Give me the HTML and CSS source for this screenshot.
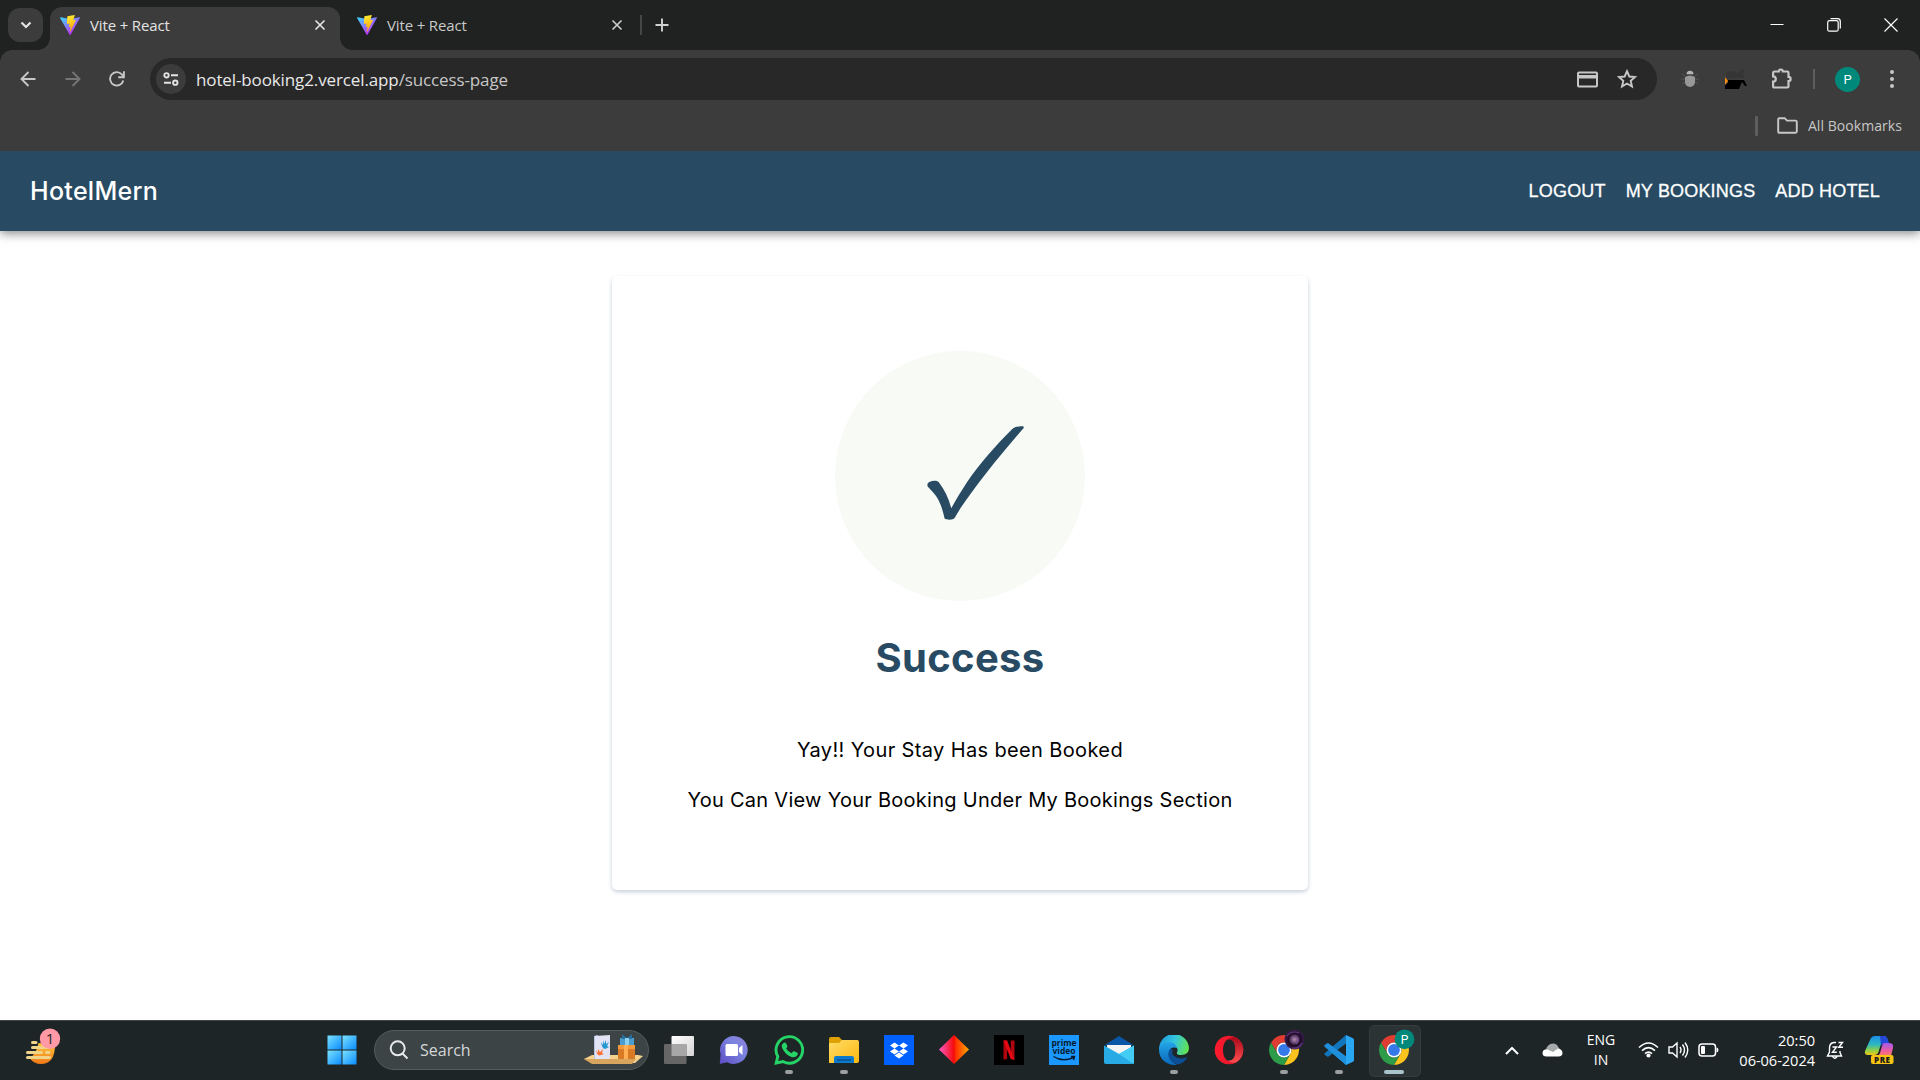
FILE: index.html
```html
<!DOCTYPE html>
<html lang="en">
<head>
<meta charset="utf-8">
<title>Vite + React</title>
<link rel="stylesheet" href="styles.css">
</head>
<body>
<svg class="defs" width="0" height="0" aria-hidden="true">
  <defs>
    <linearGradient id="v1" x1="0" y1=".1" x2=".6" y2=".9"><stop offset="0" stop-color="#41d1ff"/><stop offset="1" stop-color="#bd34fe"/></linearGradient>
    <linearGradient id="v2" x1=".4" y1="0" x2=".6" y2="1"><stop offset="0" stop-color="#ffea33"/><stop offset="1" stop-color="#ffa000"/></linearGradient>
    <linearGradient id="win" x1="0" y1="0" x2="1" y2="1"><stop offset="0" stop-color="#7ae2ff"/><stop offset="1" stop-color="#0a8bff"/></linearGradient>
    <linearGradient id="chat" x1="1" y1="0" x2="0" y2="1"><stop offset="0" stop-color="#8f80dd"/><stop offset=".4" stop-color="#7b83df"/><stop offset="1" stop-color="#5b4bc4"/></linearGradient>
    <linearGradient id="fold" x1="0" y1="0" x2="1" y2="1"><stop offset="0" stop-color="#ffdc68"/><stop offset="1" stop-color="#fbb80f"/></linearGradient>
    <linearGradient id="dia"><stop offset="0" stop-color="#ff5bc8"/><stop offset=".5" stop-color="#f50a0a"/><stop offset=".56" stop-color="#ff3000"/><stop offset="1" stop-color="#ffa800"/></linearGradient>
    <linearGradient id="edge1" x1="0" y1=".3" x2="1" y2=".5"><stop offset="0" stop-color="#1f9be0"/><stop offset=".5" stop-color="#33c6dd"/><stop offset="1" stop-color="#62e252"/></linearGradient>
    <linearGradient id="edge2" x1="0" y1="0" x2="0" y2="1"><stop offset="0" stop-color="#24a5e8"/><stop offset="1" stop-color="#0967ba"/></linearGradient>
    <linearGradient id="opera"><stop offset="0" stop-color="#ff1b2d"/><stop offset="1" stop-color="#d8142a"/></linearGradient>
    <linearGradient id="opera2" x1="0" y1="0" x2="0" y2="1"><stop offset="0" stop-color="#a8081a"/><stop offset="1" stop-color="#ff5050"/></linearGradient>
    <linearGradient id="view" x1="0" y1="0" x2="1" y2="1"><stop offset="0" stop-color="#fff"/><stop offset="1" stop-color="#d4d4d4"/></linearGradient>
    <linearGradient id="cop1" x1="0" y1="0" x2="0" y2="1"><stop offset="0" stop-color="#1c8ee8"/><stop offset=".45" stop-color="#2eb8c0"/><stop offset=".75" stop-color="#8ccf48"/><stop offset="1" stop-color="#f0c818"/></linearGradient>
    <linearGradient id="cop2" x1="0" y1="0" x2="0" y2="1"><stop offset="0" stop-color="#a15cf0"/><stop offset=".6" stop-color="#ee5c9c"/><stop offset="1" stop-color="#ff8060"/></linearGradient>
    <linearGradient id="wthr" x1="0" y1="0" x2="0" y2="1"><stop offset="0" stop-color="#ffc83c"/><stop offset="1" stop-color="#f07818"/></linearGradient>
    <radialGradient id="face"><stop offset="0" stop-color="#b68fae"/><stop offset=".35" stop-color="#6a4878"/><stop offset=".6" stop-color="#1d0a24"/><stop offset="1" stop-color="#3a2050"/></radialGradient>
    <symbol id="vite" viewBox="0 0 256 257">
      <path fill="url(#v1)" d="M255.153 37.938L134.897 252.976c-2.483 4.44-8.862 4.466-11.382.048L.875 37.958c-2.746-4.814 1.371-10.646 6.827-9.67l120.385 21.517a6.537 6.537 0 0 0 2.322-.004l117.867-21.483c5.438-.991 9.574 4.796 6.877 9.62Z"/>
      <path fill="url(#v2)" d="M185.432.063L96.44 17.501a3.268 3.268 0 0 0-2.634 3.014l-5.474 92.456a3.268 3.268 0 0 0 3.997 3.378l24.777-5.718c2.318-.535 4.413 1.507 3.936 3.838l-7.361 36.047c-.495 2.426 1.782 4.5 4.151 3.78l15.304-4.649c2.372-.72 4.652 1.36 4.15 3.788l-11.698 56.621c-.732 3.542 3.979 5.473 5.943 2.437l1.313-2.028l72.516-144.72c1.215-2.423-.88-5.186-3.54-4.672l-25.505 4.922c-2.396.462-4.435-1.77-3.759-4.114l16.646-57.705c.677-2.35-1.37-4.583-3.769-4.113Z"/>
    </symbol>
    <symbol id="x" viewBox="0 0 12 12"><path d="M1.5 1.5l9 9M10.500 1.500l-9 9" stroke="currentColor" stroke-width="1.7" fill="none"/></symbol>
    <symbol id="chrome" viewBox="-15 -15 30 30">
      <path fill="#e03c31" d="M-12.99-7.5A15 15 0 0 1 12.99-7.5L0-7.5A7.5 7.5 0 0 0-6.5 3.75Z"/>
      <path fill="#fcc31e" transform="rotate(120)" d="M-12.99-7.5A15 15 0 0 1 12.99-7.5L0-7.5A7.5 7.5 0 0 0-6.5 3.75Z"/>
      <path fill="#2d9c48" transform="rotate(240)" d="M-12.99-7.5A15 15 0 0 1 12.99-7.5L0-7.5A7.5 7.5 0 0 0-6.5 3.75Z"/>
      <circle r="7.5" fill="#fff"/><circle r="5.900" fill="#3478ea"/>
    </symbol>
  </defs>
</svg>

<div class="tabstrip">
  <div class="tab-search"><svg width="12" height="8" viewBox="0 0 12 8"><path d="M1.500 1.500L6 6l4.500-4.500" fill="none" stroke="#e3e3e3" stroke-width="2.200"/></svg></div>
  <div class="tab active"><svg class="fav"><use href="#vite"/></svg><span class="tab-title">Vite + React</span><svg class="tab-x"><use href="#x"/></svg></div>
  <div class="tab"><svg class="fav"><use href="#vite"/></svg><span class="tab-title">Vite + React</span><svg class="tab-x"><use href="#x"/></svg></div>
  <div class="tab-sep"></div>
  <svg class="tab-plus" width="14" height="14" viewBox="0 0 14 14"><path d="M7 .5v13M.5 7h13" stroke="#d0d0d0" stroke-width="1.900"/></svg>
  <div class="win-controls">
    <div class="win-btn"><svg width="14" height="14"><path d="M.5 6.500h13" stroke="#fff" stroke-width="1"/></svg></div>
    <div class="win-btn"><svg width="14" height="14" fill="none" stroke="#fff" stroke-width="1.200"><rect x=".7" y="2.700" width="10.500" height="10.500" rx="1.800"/><path d="M3.500.7h7a2.800 2.800 0 0 1 2.800 2.800v7"/></svg></div>
    <div class="win-btn"><svg width="14" height="14"><path d="M.5.5l13 13M13.500.5l-13 13" stroke="#fff" stroke-width="1.200"/></svg></div>
  </div>
</div>

<div class="chrome-bars">
  <div class="toolbar">
    <svg class="nav-icon" viewBox="0 0 16 16"><path d="M15.500 8H1.500M8.500 1L1.500 8l7 7"/></svg>
    <svg class="nav-icon off" viewBox="0 0 16 16"><path d="M.5 8h14M7.500 1l7 7-7 7"/></svg>
    <svg class="nav-icon" viewBox="0 0 16 16"><path d="M14.300 9.500A6.700 6.700 0 1 1 12.800 3.300L14.800 5.500M14.900.3v5.900H9.200"/></svg>
    <div class="url-field">
      <div class="site-info"><svg width="16" height="14" fill="none" stroke="#e3e3e3" stroke-width="1.900"><circle cx="3.500" cy="3.300" r="2.200"/><path d="M8 3.300h7M1 10.700h7"/><circle cx="12.300" cy="10.700" r="2.200"/></svg></div>
      <div class="url"><b>hotel-booking2.vercel.app</b>/success-page</div>
      <svg class="pay" width="21" height="17" viewBox="0 0 21 17"><path fill="#c7c7c7" fill-rule="evenodd" d="M2 .5h17a2 2 0 0 1 2 2v12a2 2 0 0 1-2 2H2a2 2 0 0 1-2-2v-12a2 2 0 0 1 2-2zM2 2.500v1.400h17V2.500zM2 7.600v6.900h17V7.600z"/></svg>
      <svg width="20" height="20" viewBox="0 0 20 20"><path d="M10 2.200l2.300 5.300 5.700.5-4.300 3.800 1.300 5.700-5-3-5 3 1.300-5.700L2 8l5.700-.5z" fill="none" stroke="#c7c7c7" stroke-width="1.900"/></svg>
    </div>
    <svg class="ext-bug" width="18" height="18" viewBox="0 0 18 18"><path d="M1 4l3 2M0 9h4M1 14l3-2M17 4l-3 2M18 9h-4M17 14l-3-2" stroke="#555" fill="none"/><path d="M5.500 4.200a3.500 3.500 0 0 1 7 0z" fill="#b5b5b5"/><path d="M4 7q5-3 10 0v5a5 5 0 0 1-10 0z" fill="#989898"/></svg>
    <svg class="ext-cat" width="22" height="22" viewBox="0 0 22 22"><path d="M1 5q5-4 10 0 4 0 5-3l4-1-2 5 2 4H1z" fill="#353535"/><path d="M0 9l3 4-3 4z" fill="#f58a0c"/><path d="M3 12h16l3 6h-2l-3-4-3 7H0v-4l3-2z" fill="#000"/></svg>
    <svg class="puzzle" width="22" height="22" viewBox="0 0 22 22"><path d="M3.500 3.500h4.300a2 2 0 0 1 4 0h4.500q1.200 0 1.200 1.200v4.200a2.100 2.100 0 0 1 0 4.200v5.200q0 1.200-1.200 1.200H3.300q-1.200 0-1.200-1.200v-4.600a2.700 2.700 0 0 0 0-5.400V4.700q0-1.200 1.400-1.200z" fill="none" stroke="#c7c7c7" stroke-width="2.200"/></svg>
    <div class="bar-sep"></div>
    <div class="avatar">P</div>
    <svg class="dots" width="4" height="18" fill="#c7c7c7"><circle cx="2" cy="2" r="2"/><circle cx="2" cy="9" r="2"/><circle cx="2" cy="16" r="2"/></svg>
  </div>
  <div class="bookmarks">
    <div class="bm-sep"></div>
    <svg width="21" height="17" viewBox="0 0 21 17"><path d="M2.200 1.200h5.500l2.300 2.400h8.600q1.200 0 1.200 1.200v9.800q0 1.200-1.200 1.200H2.400q-1.200 0-1.200-1.200V2.400q0-1.200 1-1.200z" fill="none" stroke="#c7c7c7" stroke-width="1.900"/></svg>
    <span>All Bookmarks</span>
  </div>
</div>

<header class="site-header">
  <div class="brand">HotelMern</div>
  <nav class="site-nav"><a>LOGOUT</a><a>MY BOOKINGS</a><a>ADD HOTEL</a></nav>
</header>

<main class="page">
  <section class="card">
    <div class="badge"><svg width="250" height="250" viewBox="835 351 250 250"><path fill="#284b63" d="M927.800 486.700C927 484.500 927.300 483.300 929 482.200C931.500 481 934 480.600 936.700 481C937.600 481.200 938.200 481.500 938.800 482.300C944.500 489.500 948.500 498 951.300 508.300C956 499.500 961.500 490.500 967.300 481.700C974 472 981 463 988 455C996 445.500 1004 437 1012.300 428.900C1015.500 426.700 1018.500 426.300 1022.900 426.300C1024 426.600 1024.100 427.300 1023.500 428.300C1018 434.500 1012.500 441 1006.400 448.300C998.500 457.500 991 467 983.400 476.700C975 487.500 967.500 498 960.400 508.300L954.600 518C953.600 519.300 952 519.600 949.400 519.700C947 519.700 945.600 519.500 944.600 518.600C943.600 514 942.400 509.500 940.700 505C938.900 500.500 936.700 496.500 933.800 493.300C932 491 930 488.700 927.800 486.700Z"/></svg></div>
    <h1>Success</h1>
    <p class="booked">Yay!! Your Stay Has been Booked</p>
    <p class="hint">You Can View Your Booking Under My Bookings Section</p>
  </section>
</main>

<footer class="taskbar">
  <div class="weather"><svg width="50" height="50" viewBox="0 0 50 50"><path d="M31 20Q31 39 17 39 10 39 5.500 33q7-4 9-15z" fill="url(#wthr)"/><path d="M8.500 17.500h3.500M8.500 22.500h15M3.500 27.500h14M22.500 27.500h2.500M3.500 32.500h22" stroke="#f0d489" stroke-width="3" stroke-linecap="round"/><circle cx="26" cy="13.700" r="10.200" fill="#ff99a6"/><text x="26" y="19.200" text-anchor="middle" class="count">1</text></svg></div>
  <div class="app"><svg width="30" height="30"><g fill="url(#win)"><rect x=".5" y=".5" width="14" height="14"/><rect x="15.500" y=".5" width="14" height="14"/><rect x=".5" y="15.500" width="14" height="14"/><rect x="15.500" y="15.500" width="14" height="14"/></g></svg></div>
  <div class="search">
    <svg width="20" height="20" viewBox="0 0 20 20" fill="none" stroke="#e8eaea" stroke-width="2"><circle cx="8.700" cy="8.300" r="7"/><path d="M13.500 13.500l5 5"/></svg>
    <span>Search</span>
    <svg class="gifts" width="60" height="32" viewBox="0 0 60 32"><path d="M0 25l8-4h46l5 1-8 7H9z" fill="#f6d08d"/><path d="M0 25h52l-4 5H8z" fill="#d8a55e"/><path d="M10 2l4-1v24h-4z" fill="#b9c4e2"/><path d="M11 2l15-1v24H11z" fill="#e2e3f4"/><path d="M17 8l2 3 0-5 1 4 2-4v4l3-2-2 4 2 1-4 2q-3 0-4-7" fill="#2598cf"/><path d="M12 16l2 3v-4l2 3 3-3-1 4 2 1-3 1q-4 2-5-5" fill="#ff7134"/><path d="M36 4h14v8H36z" fill="#4a9dcc"/><path d="M38 0l5 4 5-4v5H38z" fill="#276e9c"/><path d="M41 4h4v8h-4z" fill="#8bd0ee"/><path d="M34 11h17v14H34z" fill="#d97b24"/><path d="M34 11h17v4H34z" fill="#f59a3c"/><path d="M40 11h4v14h-4z" fill="#ffb054"/></svg>
  </div>
  <div class="app"><svg width="30" height="30"><rect x="7.500" y="1" width="22.500" height="20" rx="1" fill="url(#view)"/><rect x="0" y="9" width="22.500" height="20" rx="1" fill="#666"/><path d="M7.500 9h15v12h-15z" fill="#a7a7a7"/></svg></div>
  <div class="app"><svg width="30" height="30"><path d="M15 1a14 14 0 1 1-7 26.300L.8 29l.8-10A14 14 0 0 1 15 1z" fill="url(#chat)"/><rect x="6.500" y="9" width="12.500" height="12" rx="1.500" fill="#fff"/><path d="M20 13l3.500-3v10L20 17z" fill="#fff"/></svg></div>
  <div class="app run"><svg width="30" height="30"><path d="M2.200 28l1.600-6.500A13.300 13.300 0 1 1 9 26.600z" fill="none" stroke="#25d366" stroke-width="2.900"/><path d="M9.500 8q1.500-1.300 2.600.3l1.200 2.800q.3 1-1.200 2.500 2 3.200 5.400 4.600l1.500-1.700q.6-.6 1.400-.2l3 1.500q.8.500.2 2-1 2.500-4 2.400-4.500-.4-8.200-4.300-4.500-5-3.500-7.800.5-1.300 1.600-2.100z" fill="#25d366"/></svg></div>
  <div class="app run"><svg width="30" height="30"><path d="M0 4q0-2 2-2h8l3 3h16v9H0z" fill="#e0a106"/><path d="M0 8h10l3-3h15q2 0 2 2v19q0 2-2 2H0z" fill="url(#fold)"/><path d="M5 28v-5q0-2 2-2h16q2 0 2 2v5z" fill="#0d79ca"/><path d="M8 25h14" stroke="#053f7a"/></svg></div>
  <div class="app"><svg width="30" height="30"><path d="M0 0h30v30H0z" fill="#0061ff"/><path fill="#fff" d="M10.500 7.500l4.500 3-4.500 3-4.500-3zM19.500 7.500l4.500 3-4.500 3-4.500-3zM10.500 13.500l4.500 3-4.500 3-4.500-3zM19.500 13.500l4.500 3-4.500 3-4.500-3zM15 17.400l4.500 3-4.500 3-4.500-3z"/></svg></div>
  <div class="app"><svg width="30" height="30"><path d="M15 0l15 14.500L15 29 0 14.500z" fill="url(#dia)"/></svg></div>
  <div class="app"><svg width="30" height="30"><path d="M0 0h30v30H0z"/><path d="M9.500 5.500h3.600V24l-3.600.7zM16.800 5.500h3.700v19.200l-3.700-.7z" fill="#b1060f"/><path d="M9.500 5.500h3.600l7.400 19.200-3.700-.7z" fill="#e50914"/></svg></div>
  <div class="app"><svg width="30" height="30"><path d="M0 0h30v30H0z" fill="#1a98ff"/><text x="15" y="10.500" text-anchor="middle" class="pv">prime</text><text x="15" y="19" text-anchor="middle" class="pv">video</text><path d="M4.500 21.500q9 6 20 1M22 21.500h3.500l-1 3.500" fill="none" stroke="#061b2e" stroke-width="1.500"/></svg></div>
  <div class="app"><svg width="30" height="30"><path d="M0 10.500L15 1l15 9.500z" fill="#0a56a6"/><path d="M3 10h24v10H3z" fill="#f4f4f4"/><path d="M0 10.500l15 8.500 15-8.500V27q0 2-2 2H2q-2 0-2-2z" fill="#35bbee"/><path d="M15 19l15 10H2q-2 0-2-2V10.500z" fill="#1690d8" opacity=".4"/><path d="M15 19l15-8.500V29z" fill="#43cdf5"/></svg></div>
  <div class="app run"><svg width="30" height="30"><path d="M0 15A15 15 0 0 1 30 13q0 7-8 7-5 0-4-3 2-3-2-6Q8 6 0 15z" fill="url(#edge1)"/><path d="M0 15Q3 7 11 7q6 1 7 6-7-2-8 5-1 8 8 11.700A15 15 0 0 1 0 15z" fill="url(#edge2)"/><path d="M11 14q-4 6 1 12 4 4 8 3.200 5-1.200 8-6.200.5-1.200-1-.5-7 2.500-12-1.500-3-3-1-6z" fill="#0d4f94"/></svg></div>
  <div class="app"><svg width="30" height="30"><path fill="url(#opera)" fill-rule="evenodd" d="M15 .7a14.300 14.300 0 1 0 .01 0zM15.500 4c3.800 0 6 5 6 11s-2.200 11-6 11-6.500-5-6.500-11 2.700-11 6.500-11z"/><path d="M14 4.500q5-4 9.500-1Q29.300 8 29.300 15T23.500 26.500q-4.500 3-9.500-1 7.500 1 7.500-10.500T14 4.500z" fill="url(#opera2)"/></svg></div>
  <div class="app run"><svg width="30" height="30" class="over"><use href="#chrome" width="30" height="30"/><circle cx="25.500" cy="4.500" r="10" fill="url(#face)"/><path d="M18 1q5-6 12-3M33 8q-3 6-10 5M28 2q3 4-1 7" stroke="#8a56b4" stroke-width="1.200" fill="none" opacity=".6"/></svg></div>
  <div class="app run"><svg width="30" height="30"><path d="M22 0l7 3.300q1 .5 1 1.700v20q0 1.200-1 1.700L22 30z" fill="#2aa7f2"/><path d="M22 30L.5 11.500Q0 10.500 1 10l2-1.500q.7-.5 1.500 0L22 21.500z" fill="#1b86d1"/><path d="M22 0L.5 18.500q-.5 1 .5 1.500l2 1.500q.7.5 1.500 0L22 8.500z" fill="#1276bd"/><path d="M.5 11.500Q0 10.500 1 10l2-1.500q.7-.5 1.500 0L22 21.500V30z" fill="#1f8fdb"/></svg></div>
  <div class="app run current"><svg width="30" height="30" class="over"><use href="#chrome" width="30" height="30"/><circle cx="25.500" cy="4.300" r="9.900" fill="#00897b"/><text x="25.500" y="8.600" text-anchor="middle" class="pbadge">P</text></svg></div>

  <div class="tray">
    <svg class="t-chev" width="14" height="9"><path d="M1 8l6-6 6 6" fill="none" stroke="#fff" stroke-width="2"/></svg>
    <svg class="t-cloud" width="21" height="14"><path d="M4 7Q5 1 11 .5q4 0 5.500 4L20 8 8 11z" fill="#a7aaab"/><path d="M4.500 13.500Q.5 13.500.5 10T5 6.300L11 9l5-3.400q4.500 1 4.500 4.500 0 3.400-4 3.400z" fill="#fff"/></svg>
    <div class="t-lang">ENG<br>IN</div>
    <svg class="t-wifi" width="21" height="16" viewBox="0 0 21 16" fill="none" stroke="#fff" stroke-width="1.600"><path d="M1 5.500q9.500-9 19 0M4 8.700q6.500-6 13 0M7 11.700q3.500-3.200 7 0"/><circle cx="10.500" cy="13.500" r="1.300" fill="#fff"/></svg>
    <svg class="t-sound" width="21" height="18" viewBox="0 0 21 18" fill="none" stroke="#fff" stroke-width="1.400"><path d="M1 6h3.500L9 2v14l-4.500-4H1zM12 6q2 3 0 6M14.500 3.500q4 5.500 0 11M17 1.500q5.500 7.500 0 15"/></svg>
    <svg class="t-batt" width="21" height="14" viewBox="0 0 21 14"><rect x="1" y="1" width="16.500" height="12" rx="3" fill="none" stroke="#fff" stroke-width="1.500"/><rect x="3" y="3" width="4" height="8" rx="1" fill="#fff"/><path d="M18.500 4.500q2 .3 2 2.500t-2 2.500z" fill="#fff"/></svg>
    <div class="t-clock">20:50<br>06-06-2024</div>
    <svg class="t-bell" width="18" height="19" viewBox="0 0 18 19" fill="none" stroke="#fff" stroke-width="1.400"><path d="M10 1.500H8Q3.500 2 3.500 7v4L1.500 15h14l-1.500-3.500V10M6.500 15.500q2.200 3.500 4.500 0M6.500 6h4l-4 5.200h4.300M12.500 1.500h4L12.800 6.300h4.200"/></svg>
    <svg class="t-copilot" width="32" height="30" viewBox="0 0 32 30"><path d="M6 5Q7.500 1 11 1h9q3 0 3.500 4l.5 3h-4q-3 0-4 4l-1.500 5q-1 3-4.500 3H4q-4 0-3-4z" fill="url(#cop1)"/><path d="M16 1h4q3 0 4 4l1 3h-4q-3 0-4 3z" fill="#2548d8"/><path d="M20 8h5q5 0 4 5l-2 8H12q3 0 4-3l2-7q.7-3 2-3z" fill="url(#cop2)"/><rect x="7" y="20" width="22.500" height="9" rx="2" fill="#f7c414"/><text x="18.300" y="27.700" text-anchor="middle" class="pre">PRE</text></svg>
  </div>
</footer>
</body>
</html>
```
FILE: styles.css
```css
* { box-sizing: border-box; }
body {
  margin: 0;
  width: 1920px;
  height: 1080px;
  overflow: hidden;
  display: flex;
  flex-direction: column;
  background: #fff;
  font-family: "Open Sans", "Noto Sans", sans-serif;
}
svg { display: block; flex: none; }
.defs { position: absolute; }

/* Browser tab strip */
.tabstrip {
  height: 50px;
  display: flex;
  align-items: center;
  padding-left: 8px;
  background: #1f2220;
  color: #e3e3e3;
}
.tab-search {
  width: 35px;
  height: 34px;
  margin-right: 7px;
  border-radius: 12px;
  background: #3c3c3c;
  display: flex;
  align-items: center;
  justify-content: center;
}
.tab {
  position: relative;
  width: 290px;
  height: 43px;
  margin: 7px 0 0 7px;
  padding: 0 14px 7px 10px;
  display: flex;
  align-items: center;
  color: #c9cac9;
}
.tab.active {
  margin-left: 0;
  border-radius: 12px 12px 0 0;
  background: #3c3c3c;
  color: #e3e3e3;
}
.tab.active::before,
.tab.active::after {
  content: "";
  position: absolute;
  bottom: 0;
  width: 12px;
  height: 12px;
}
.tab.active::before { left: -12px; background: radial-gradient(circle at 0 0, transparent 11.5px, #3c3c3c 12px); }
.tab.active::after { right: -12px; background: radial-gradient(circle at 100% 0, transparent 11.5px, #3c3c3c 12px); }
.fav { width: 20px; height: 20px; }
.tab-title { flex: 1; margin-left: 10px; font-size: 15px; letter-spacing: -0.15px; line-height: 20px; }
.tab-x { width: 12px; height: 12px; }
.tab-sep { width: 2px; height: 20px; margin-left: 3px; background: #454746; }
.tab-plus { margin-left: 13px; }
.win-controls { display: flex; margin-left: auto; padding-right: 1px; }
.win-btn { width: 57px; display: flex; justify-content: center; }

/* Toolbar and bookmarks bar */
.chrome-bars {
  height: 101px;
  background: radial-gradient(circle at 12px 12px, #3c3c3c 11.5px, #1f2220 12px) 0 0 / 12px 12px no-repeat,
    radial-gradient(circle at 0 12px, #3c3c3c 11.5px, #1f2220 12px) 100% 0 / 12px 12px no-repeat, #3c3c3c;
}
.toolbar { height: 58px; display: flex; align-items: center; padding-left: 20px; }
.nav-icon { width: 16px; height: 16px; margin-right: 28.5px; fill: none; stroke: #c7c7c7; stroke-width: 1.9; }
.nav-icon.off { stroke: #757575; }
.url-field {
  width: 1507px;
  height: 42px;
  margin-left: -3.5px;
  padding: 0 20px 0 6px;
  border-radius: 21px;
  background: #282828;
  display: flex;
  align-items: center;
}
.site-info {
  width: 30px;
  height: 30px;
  border-radius: 50%;
  background: #3c3c3c;
  display: flex;
  align-items: center;
  justify-content: center;
}
.url { flex: 1; margin-left: 10px; padding-top: 1px; font-size: 17px; letter-spacing: -0.12px; line-height: 24px; color: #c7c7c7; }
.url b { font-weight: 400; color: #e9e9e9; }
.pay { margin-right: 19px; }
.ext-bug { margin-left: 24px; }
.ext-cat { margin-left: 26px; }
.puzzle { margin-left: 23.5px; }
.bar-sep { width: 2px; height: 20px; margin-left: 20.500px; background: #5e5e5e; }
.avatar {
  width: 25px;
  height: 25px;
  margin-left: 20px;
  border-radius: 50%;
  background: #00897b;
  color: #fff;
  font: 13px/25px Roboto, sans-serif;
  text-align: center;
}
.dots { margin-left: 30px; }
.bookmarks {
  display: flex;
  align-items: center;
  justify-content: flex-end;
  height: 35px;
  padding-right: 18px;
  color: #c7c7c7;
  font-size: 14px;
}
.bookmarks span { margin-left: 10px; letter-spacing: 0.06px; }
.bm-sep { width: 3px; height: 20px; margin-right: 19px; border-radius: 1px; background: #5e5e5e; }

/* Site header */
.site-header {
  position: relative;
  height: 80px;
  padding: 0 40px 0 30px;
  display: flex;
  align-items: center;
  justify-content: space-between;
  background: #284b63;
  color: #fff;
  box-shadow: 0 2px 10px rgba(0, 0, 0, 0.5);
  clip-path: inset(0 0 -20px 0);
}
.brand { font: 500 25px/38px Inter, sans-serif; letter-spacing: 0.3px; }
.site-nav { display: flex; gap: 20px; font: 18px/24px "Liberation Sans", Arial, sans-serif; letter-spacing: 0.18px; -webkit-text-stroke: 0.3px #fff; }

/* Confirmation card */
.page { flex: 1; display: flex; justify-content: center; align-items: flex-start; padding-top: 45px; }
.card {
  width: 696px;
  padding: 75px 0;
  border-radius: 5px;
  background: #fff;
  box-shadow: 0 2px 4px #c8d0d8;
  display: flex;
  flex-direction: column;
  align-items: center;
  font-family: Inter, sans-serif;
}
.badge { width: 250px; height: 250px; border-radius: 50%; background: #f8faf5; }
.card h1 { margin: 27px 0 47px; font-size: 40px; line-height: 60px; font-weight: 700; letter-spacing: 0.3px; color: #284b63; }
.card p { margin: 0; font-size: 20px; line-height: 30px; color: #000; }
.card .booked { letter-spacing: 0.37px; margin-bottom: 20px; }
.card .hint { letter-spacing: 0.27px; }

/* Windows taskbar */
.taskbar {
  height: 60px;
  display: flex;
  align-items: center;
  background: #1d2526;
  box-shadow: inset 0 1px #3e4647;
  color: #fff;
}
.weather { width: 314.5px; padding-left: 24px; }
.count { font: 15px "Open Sans", sans-serif; fill: #1d2526; }
.search {
  width: 275px;
  height: 40px;
  margin: 0 2.5px 0 4.5px;
  padding: 0 4px 0 14px;
  border: 1px solid #555c5e;
  border-radius: 20px;
  background: #3c4446;
  display: flex;
  align-items: center;
  color: #d4d7d8;
  font-size: 16px;
}
.search span { flex: 1; margin-left: 11px; }
.app {
  position: relative;
  width: 55px;
  height: 60px;
  display: flex;
  align-items: center;
  justify-content: center;
}
.over { overflow: visible; }
.run::after {
  content: "";
  position: absolute;
  bottom: 6px;
  width: 8px;
  height: 4px;
  border-radius: 2px;
  background: #9b9fa0;
}
.current { z-index: 0; }
.current::before {
  content: "";
  position: absolute;
  z-index: -1;
  left: 2.5px;
  top: 5px;
  width: 50px;
  height: 50px;
  border: 1px solid #343c3d;
  border-radius: 5px;
  background: #2b3334;
}
.current::after { width: 20px; background: #a9c5cb; }
.pv { font: 700 8.5px "Open Sans", sans-serif; fill: #061b2e; }
.pbadge { font: 12px Roboto, sans-serif; fill: #fff; }
.pre { font: 800 8px "Open Sans", sans-serif; letter-spacing: 0.5px; fill: #1a1a1a; }
.tray { display: flex; align-items: center; margin-left: auto; padding-right: 24px; height: 60px; }
.t-cloud { margin-left: 23px; }
.t-lang { width: 40px; margin-left: 18px; text-align: center; font-size: 14px; line-height: 20px; }
.t-wifi { margin-left: 17px; }
.t-sound { margin-left: 9px; }
.t-batt { margin-left: 9px; }
.t-clock { width: 90px; margin-left: 6px; text-align: right; font-size: 14.6px; line-height: 20px; letter-spacing: -0.05px; padding-bottom: 1px; }
.t-bell { margin-left: 11px; }
.t-copilot { margin-left: 20px; }
```
